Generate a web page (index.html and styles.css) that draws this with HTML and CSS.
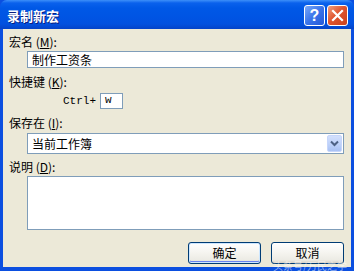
FILE: index.html
```html
<!DOCTYPE html>
<html>
<head>
<meta charset="utf-8">
<link rel="stylesheet" href="styles.css">
</head>
<body>
<div class="window">
  <div class="titlebar">
    <span class="title">录制新宏</span>
    <div class="tbtns">
      <span class="tbtn help">?</span>
      <span class="tbtn close">
        <svg width="13" height="13" viewBox="0 0 13 13"><path d="M2 2 L11 11 M11 2 L2 11" stroke="#fff" stroke-width="2.2" stroke-linecap="square"/></svg>
      </span>
    </div>
  </div>
  <div class="client">
    <div class="label l1">宏名 (<u>M</u>):</div>
    <div class="field input1">制作工资条</div>
    <div class="label l2">快捷键 (<u>K</u>):</div>
    <div class="ctrlrow">
      <span class="ctrl">Ctrl+</span>
      <span class="field wbox">w</span>
    </div>
    <div class="label l3">保存在 (<u>I</u>):</div>
    <div class="field select">
      <span class="seltext">当前工作簿</span>
      <span class="drop">
        <svg width="9" height="7" viewBox="0 0 9 7"><path d="M1 1.5 L4.5 5 L8 1.5" stroke="#4d6185" stroke-width="2" fill="none"/></svg>
      </span>
    </div>
    <div class="label l4">说明 (<u>D</u>):</div>
    <div class="field area"></div>
    <div class="buttons">
      <span class="btn default">确定</span>
      <span class="btn">取消</span>
    </div>
    <div class="watermark">头条号/万民之学</div>
  </div>
</div>
</body>
</html>
```
FILE: styles.css
```css
html, body { margin: 0; padding: 0; }
body { width: 354px; height: 271px; overflow: hidden; background: #0a3fc4; }
.window {
  width: 354px; height: 271px; display: flex; flex-direction: column;
  font-family: "Noto Sans CJK SC", "Liberation Sans", sans-serif; font-size: 12px; color: #000;
  background: #0b4fe0;
}
.titlebar {
  height: 29px; flex: none; display: flex; align-items: center; justify-content: space-between;
  background: linear-gradient(to bottom, #3d8ff9 0px, #0a61ec 3px, #0058e6 8px, #0054e3 18px, #0251df 24px, #0443c8 29px);
  border-radius: 7px 7px 0 0;
  padding: 0 6px 0 7px;
}
.title {
  color: #fff; font-weight: bold; font-size: 13px;
  text-shadow: 1px 1px 0 #0a1e80;
  margin-top: 1px;
}
.tbtns { display: flex; gap: 2px; margin-top: 2px; }
.tbtn {
  width: 19px; height: 19px; border: 1px solid #fff; border-radius: 3px;
  display: flex; align-items: center; justify-content: center; color: #fff;
}
.help {
  background: linear-gradient(135deg, #7aa8f8 0%, #3a74ea 50%, #2358d8 100%);
  font-family: "Liberation Sans", sans-serif; font-weight: bold; font-size: 16px;
}
.close {
  background: linear-gradient(135deg, #f0a07e 0%, #e0552f 45%, #c9401c 100%);
}
.client {
  flex: 1; position: relative; background: #ece9d8;
  margin: 0 3px 4px 3px; padding: 6px 7px 0 6px;
  display: flex; flex-direction: column;
}
.label { line-height: 14px; height: 14px; }
.label u { text-underline-offset: 1px; }
.field { background: #fff; border: 1px solid #7f9db9; box-sizing: border-box; }
.input1 { margin: 2px 0 0 18px; height: 17px; line-height: 15px; padding-left: 4px; }
.l2 { margin-top: 7px; }
.ctrlrow { margin: 4px 0 0 54px; display: flex; align-items: center; gap: 4px; height: 16px; }
.ctrl { font-family: "Liberation Mono", monospace; font-size: 11px; }
.wbox { width: 23px; height: 16px; line-height: 13px; padding-left: 4px; font-family: "Liberation Mono", monospace; font-size: 11px; }
.l3 { margin-top: 7px; }
.select {
  margin: 3px 0 0 18px; height: 21px; display: flex; align-items: center; justify-content: space-between;
  padding: 0 1px 0 4px;
}
.drop {
  width: 15px; height: 17px; border-radius: 2px; box-sizing: border-box;
  background: linear-gradient(to bottom, #d3e0fd 0%, #bcd0f9 60%, #a9c1f4 100%);
  border: 1px solid #c6d6fb;
  display: flex; align-items: center; justify-content: center;
}
.l4 { margin-top: 6px; }
.area { margin: 2px 0 0 18px; height: 54px; }
.buttons { margin-top: 12px; display: flex; justify-content: flex-end; gap: 10px; }
.btn {
  width: 73px; height: 22px; box-sizing: border-box; border: 1px solid #003c74; border-radius: 3px;
  background: linear-gradient(to bottom, #ffffff 0%, #f5f4ef 50%, #ecebe4 85%, #d6d0c5 100%);
  display: flex; align-items: center; justify-content: center; font-size: 12px; line-height: 14px;
}
.default { box-shadow: inset 0 0 0 1px #cee7ff, inset 0 -1px 0 1px #6982ee; }
.watermark {
  position: absolute; right: 4px; bottom: -4px; font-size: 10px; line-height: 10px;
  color: rgba(255,255,255,0.55);
}
```
